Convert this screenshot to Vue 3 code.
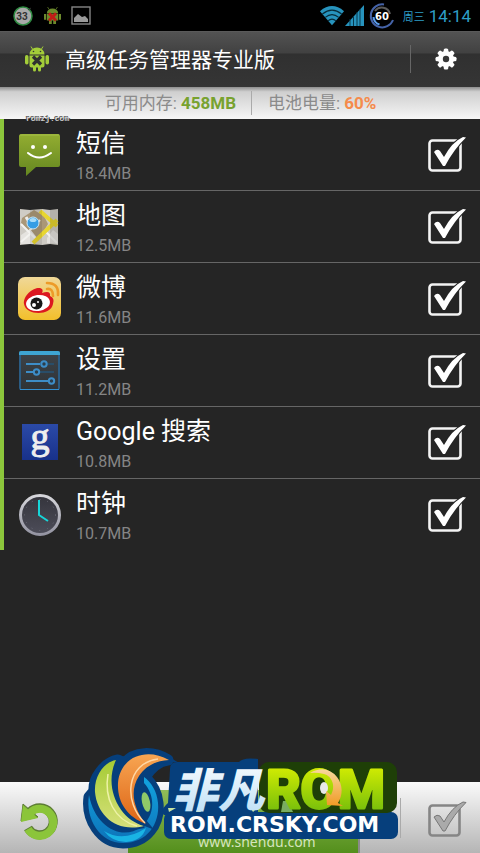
<!-- src/App.vue -->
<template>
  <div class="screen">
    <div class="status-bar">
      <div class="status-left">
        <svg width="22" height="22" viewBox="0 0 22 22">
          <circle cx="11" cy="11" r="9" fill="#a9a9a9" stroke="#2f8b42" stroke-width="1.5" />
          <text x="10" y="15" text-anchor="middle" class="badge-text">33</text>
          <path d="M16 5l3-2" stroke="#333" />
        </svg>
        <svg class="status-droid" width="17" height="17" viewBox="0 0 24 24">
          <path d="M4 9a8 7 0 0 1 16 0zM4 10h16v9H4zM0 10h3v8H0zM21 10h3v8h-3zM7 19h4v5H7zM13 19h4v5h-4z" fill="#6c8a2c" />
          <path d="M7 3L5 0M17 3l2-3" stroke="#6c8a2c" />
          <path d="M7 9l10 10M17 9L7 19" stroke="#c11b17" stroke-width="4" />
        </svg>
        <svg width="20" height="20" viewBox="0 0 20 20">
          <rect x="1" y="1" width="18" height="17" fill="none" stroke="#858585" stroke-width="1.4" />
          <path d="M3 16v-4l4-4 4 3 3-1 3 3v3z" fill="#9a9a9a" />
        </svg>
      </div>
      <div class="status-right">
        <svg width="26" height="21" viewBox="0 0 27 21">
          <path d="M1 6Q13.500-4.500 26 6L13.500 20.500z" fill="#2793bd" />
          <path d="M3.500 9Q13.500 1 23.500 9M6.500 12.500q7-6 14 0M9.500 16q4-3.500 8 0" fill="none" stroke="#062a38" stroke-width="1.2" />
        </svg>
        <svg width="19" height="21" viewBox="0 0 19 21">
          <path d="M0 21L19 0v21z" fill="#2793bd" />
          <path d="M5 14v7M8.500 11v10M12 7v14M15 4v17" stroke="#06384c" />
        </svg>
        <svg class="battery" width="26" height="26" viewBox="0 0 26 26">
          <path d="M15 1.500A11.500 11.500 0 1 0 24 17" fill="none" stroke="#4563a8" stroke-width="2" />
          <path d="M6 8a8.500 8.500 0 0 1 15 3" fill="none" stroke="#5b5b5b" stroke-width="2" />
          <path d="M4.500 14a8.500 8.500 0 0 0 6 7.500" fill="none" stroke="#5b9dea" stroke-width="2" />
          <text x="13" y="17" text-anchor="middle" class="battery-text">60</text>
        </svg>
        <span class="day">周三</span>
        <span class="clock">14:14</span>
      </div>
    </div>

    <header class="header">
      <svg class="app-icon" width="24" height="25" viewBox="0 0 24 25">
        <path d="M4.500 8.500a7.500 7 0 0 1 15 0zM4.500 9.500h15v10a2 2 0 0 1-2 2H16V24a1.300 1.300 0 0 1-3 0v-2.500h-2V24a1.300 1.300 0 0 1-3 0v-2.500H6.500a2 2 0 0 1-2-2z" fill="#a3cd39" />
        <rect x="0" y="9" width="3.500" height="9.500" rx="1.700" fill="#a3cd39" />
        <rect x="20.500" y="9" width="3.500" height="9.500" rx="1.700" fill="#a3cd39" />
        <path d="M7.500 3L6 .5M16.500 3L18 .5" stroke="#a3cd39" />
        <circle cx="8.500" cy="5.500" r=".8" fill="#333" />
        <circle cx="15.500" cy="5.500" r=".8" fill="#333" />
        <path d="M8 10.500l8 8M16 10.500l-8 8" stroke="#303030" stroke-width="3.200" />
      </svg>
      <h1>高级任务管理器专业版</h1>
      <button class="settings" aria-label="设置">
        <svg width="22" height="22" viewBox="-11 -11 22 22">
          <rect v-for="n in 4" :key="n" x="-2.300" y="-10.500" width="4.600" height="21" rx="1.500" fill="#fff" :transform="`rotate(${n * 45})`" />
          <circle r="5.500" fill="none" stroke="#fff" stroke-width="5" />
          <circle r="3.200" fill="#383838" />
        </svg>
      </button>
    </header>

    <div class="info">
      <div class="info-item memory">可用内存: <b class="green">458MB</b></div>
      <div class="info-item power">电池电量: <b class="orange">60%</b></div>
      <span class="watermark">romzj.com</span>
    </div>

    <ul class="tasks">
      <li v-for="task in tasks" :key="task.icon" class="task">
        <svg class="task-icon" width="44" height="44" viewBox="0 0 44 44">
          <g v-if="task.icon === 'sms'">
            <path d="M4 1h36q2 0 2 2v29q0 2-2 2H18L8 43V34H3q-2 0-2-2V3q0-2 3-2z" fill="url(#smsFill)" />
            <path d="M2 2h39" stroke="#a6bf48" />
            <circle cx="15" cy="14" r="2" fill="#fff" />
            <circle cx="27" cy="14" r="2" fill="#fff" />
            <path d="M10 20q11 9 23 0" fill="none" stroke="#fff" stroke-width="2" stroke-linecap="round" />
          </g>
          <g v-else-if="task.icon === 'map'">
            <path d="M2 4l10 1 12-1 8 1 8-1v36l-8-1-8 1-12-1-10 1z" fill="#cfccc5" />
            <path d="M4 13l12-8 10 6 4 8-10 17-9-10-8-8z" fill="#aa9777" />
            <path d="M3 30l9-6 8 10-4 5H3zM29 33l6-8 5 4v10l-11-1z" fill="#e5e3df" />
            <path d="M3 19l14 14M12 25l10-10M28 27l11 11M3 37l9-8" stroke="#f3f2ef" stroke-width="2" />
            <path d="M22 6l17 15M39 15L15 38" fill="none" stroke="#e8d630" stroke-width="4" />
            <path d="M12 5l12-1v36l-12-1z" fill="#000" opacity=".09" />
            <path d="M32 5l8-1v36l-8-1z" fill="#000" opacity=".13" />
            <path d="M13 20L8 12" stroke="#eee" stroke-width="3" />
            <circle cx="15" cy="18" r="6" fill="#359de5" stroke="#c6e5f6" />
            <ellipse cx="15" cy="15" rx="3.500" ry="2" fill="#a6dcfa" />
          </g>
          <g v-else-if="task.icon === 'weibo'">
            <rect width="43" height="43" rx="7" fill="url(#weiboFill)" />
            <path d="M6 27C5 18 16 10 22 11q4 1 2 5 9-3 8 3 5 2 3 8c-2 12-27 12-29 0z" fill="#dc1720" />
            <ellipse cx="20" cy="26" rx="12" ry="8" fill="#fff" transform="rotate(-7 20 26)" />
            <circle cx="18.500" cy="26.500" r="6" fill="#171717" />
            <circle cx="16" cy="28" r="2" fill="#fff" />
            <circle cx="20" cy="25" r="1" fill="#fff" />
            <path d="M29 12q6-1 6 7M29 6q12 0 11 12" fill="none" stroke="#ed9b28" stroke-width="2.600" stroke-linecap="round" />
          </g>
          <g v-else-if="task.icon === 'prefs'">
            <rect x="1" y="2" width="41" height="39" rx="2" fill="#2b5c83" />
            <rect x="3" y="6" width="37" height="34" fill="url(#prefsFill)" />
            <path d="M1 6V4q0-2 2-2h37q2 0 2 2v2z" fill="#3ea5d3" />
            <path d="M2 40.500h39" stroke="#338fd0" />
            <path d="M8 15h28M8 23h28M8 32h28" stroke="#294d68" stroke-width="2" />
            <path d="M8 15h14M8 23h7M8 32h22" stroke="#3d8dc7" stroke-width="2" />
            <g fill="#2a3d4b" stroke="#3d8dc7" stroke-width="2">
              <circle cx="26" cy="15" r="2.700" />
              <circle cx="18.500" cy="23" r="2.700" />
              <circle cx="33.500" cy="32" r="2.700" />
            </g>
          </g>
          <g v-else-if="task.icon === 'google'">
            <rect x="4" y="3" width="36" height="36" fill="url(#googleFill)" />
            <text x="22" y="28" text-anchor="middle" class="google-g">g</text>
          </g>
          <g v-else>
            <circle cx="22" cy="22" r="19.500" fill="url(#clockFill)" stroke="url(#rimFill)" stroke-width="3" />
            <circle cx="22" cy="22" r="15.500" fill="none" stroke="#6b6b78" stroke-dasharray="1 7" />
            <path d="M21 7v15l9 6" fill="none" stroke="#16d5d9" stroke-width="2" />
          </g>
        </svg>
        <div class="task-text">
          <div class="task-name">{{ task.name }}</div>
          <div class="task-size">{{ task.size }}</div>
        </div>
        <label class="check">
          <input v-model="task.checked" type="checkbox" :aria-label="task.name" />
          <svg width="40" height="38" viewBox="0 0 40 38">
            <rect x="2.500" y="4.500" width="31" height="30" rx="3" fill="none" stroke="#f4f4f4" stroke-width="2.600" />
            <path v-if="task.checked" d="M7 16q3-4 6-1l4 6Q25 6 36 1l3 .5Q27 13 18 30h-2z" fill="#fff" stroke="#252525" stroke-width="2" paint-order="stroke" />
          </svg>
        </label>
      </li>
    </ul>

    <footer class="footer">
      <button class="refresh" aria-label="刷新">
        <svg width="40" height="38" viewBox="0 0 40 38">
          <g id="arrow" fill="none" stroke="#5c7c34">
            <path d="M8 27A13.500 13.500 0 1 0 10 11" stroke-width="9" />
            <path d="M3 3L1 20l17-4z" fill="#5c7c34" />
          </g>
          <path d="M8 28A13.500 13.500 0 1 0 10 12" fill="none" stroke="#8bc53a" stroke-width="8" />
          <path d="M3 4L1 21l17-4z" fill="#8bc53a" />
        </svg>
      </button>
      <button class="clean">www.shendu.com</button>
      <label class="check select-all">
        <input v-model="allChecked" type="checkbox" aria-label="全选" />
        <svg width="40" height="38" viewBox="0 0 40 38">
          <rect x="2.500" y="5.500" width="30" height="30" rx="3" fill="none" stroke="#858585" stroke-width="2.600" />
          <path v-if="allChecked" d="M7 17q3-3 6-1l4 6Q25 7 36 2l3 .5Q27 14 18 31h-2z" fill="#aaa" stroke="#777" />
        </svg>
      </label>

      <svg class="logo" width="320" height="104" viewBox="0 0 320 104">
        <!-- swirl -->
        <g fill="#063f7c" stroke="#063f7c" stroke-width="11" stroke-linejoin="round">
          <path d="M7 48C4 70 18 94 41 94c24 0 37-19 35-40-1-12-7-20-13-26 6-9 14-16 23-17C72 2 52 2 43 14L36 11C22 14 11 29 12 42z" />
        </g>
        <path d="M7 46C3 70 18 94 41 94c24 0 37-19 35-40-1-12-7-21-14-26v6c11 12 12 32-3 44-18 14-46 1-52-32z" fill="url(#blueSwirl)" />
        <path d="M22 82q19 12 42-3-4 13-20 14-14 0-22-11z" fill="#19b4e4" />
        <path d="M34 11C22 13 12 27 13 43c2 23 21 41 49 34C38 71 21 39 34 11z" fill="url(#greenSwirl)" stroke="#063f7c" stroke-width="4" paint-order="stroke" />
        <path d="M26 25c-4 24 6 46 29 52" fill="none" stroke="#edf2a6" stroke-width="1.500" />
        <path d="M87 11C64-2 38 8 36 34c-1 19 9 34 28 41-12-14-17-33-7-48 6-9 15-15 30-16z" fill="url(#orangeSwirl)" stroke="#063f7c" stroke-width="5" paint-order="stroke" />
        <path d="M76 10C44 14 41 53 63 74" fill="none" stroke="#ffd7a4" stroke-width="1.500" />
        <ellipse cx="64" cy="53" rx="4" ry="10" fill="#8fca68" transform="rotate(-12 64 53)" />
        <!-- backing plates -->
        <path d="M88 20q0-7 7-7h62q4-5 19-3v56H82q-5-4 4-12z" fill="#063f7c" />
        <rect x="82" y="63" width="234" height="27" rx="7" fill="#063f7c" />
        <rect x="177" y="13" width="138" height="51" rx="10" fill="#1e3f07" />
        <path d="M86 59h8l-7 4zM114 63l2-5 3 5zM168 58l6 2-3 3z" fill="#c9e4a0" />
        <path d="M201 52h5l5 11h-12z" fill="#79ad60" />
        <text x="90" y="58" class="logo-cn">非凡</text>
        <text x="184" y="59" class="logo-rom">ROM</text>
        <ellipse cx="242" cy="39" rx="4" ry="6" fill="#e8e8e8" />
        <path d="M228 24q16-9 27 4c6 8 6 18 1 26l5 3-16-1-1-14 5 4c5-9 1-19-7-21q-8-2-14-1z" fill="url(#arrowFill)" />
        <text x="88" y="83" class="logo-url">ROM.CRSKY.COM</text>
      </svg>
    </footer>

    <svg class="defs" width="0" height="0" aria-hidden="true">
      <defs>
        <linearGradient v-for="g in gradients" :id="g.id" :key="g.id" x1="0" y1="0" x2="0" y2="1">
          <stop offset="0" :stop-color="g.from" />
          <stop offset="1" :stop-color="g.to" />
        </linearGradient>
      </defs>
    </svg>
  </div>
</template>

<script setup>
import { ref } from 'vue';

const tasks = ref([
  { icon: 'sms', name: '短信', size: '18.4MB', checked: true },
  { icon: 'map', name: '地图', size: '12.5MB', checked: true },
  { icon: 'weibo', name: '微博', size: '11.6MB', checked: true },
  { icon: 'prefs', name: '设置', size: '11.2MB', checked: true },
  { icon: 'google', name: 'Google 搜索', size: '10.8MB', checked: true },
  { icon: 'clock', name: '时钟', size: '10.7MB', checked: true }
]);

const allChecked = ref(true);

const gradients = [
  { id: 'smsFill', from: '#93ad31', to: '#648720' },
  { id: 'weiboFill', from: '#f0d898', to: '#f2bf2b' },
  { id: 'prefsFill', from: '#3c4247', to: '#2f3336' },
  { id: 'googleFill', from: '#2b4aa8', to: '#18318a' },
  { id: 'clockFill', from: '#34343c', to: '#4d4d59' },
  { id: 'rimFill', from: '#d5d5da', to: '#9494a2' },
  { id: 'blueSwirl', from: '#12a4e0', to: '#0d72b8' },
  { id: 'greenSwirl', from: '#a5cb34', to: '#d5e07a' },
  { id: 'orangeSwirl', from: '#f7a552', to: '#dd6415' },
  { id: 'romFill', from: '#e4f500', to: '#63b50d' },
  { id: 'cnFill', from: '#ffffff', to: '#b9ddf5' },
  { id: 'arrowFill', from: '#f8d79c', to: '#f09a24' }
];
</script>

<style>
body {
  margin: 0;
  background: #252525;
}
</style>

<style scoped>
.screen {
  display: flex;
  flex-direction: column;
  min-height: 100vh;
  overflow: hidden;
  background: #252525;
  font-family: Roboto, "Noto Sans CJK SC", sans-serif;
}

svg {
  display: block;
  flex: none;
  overflow: visible;
}

button {
  padding: 0;
  border: 0;
  background: none;
  font-family: inherit;
  cursor: pointer;
}

.status-bar {
  display: flex;
  justify-content: space-between;
  align-items: center;
  height: 31px;
  padding: 0 9px 0 12px;
  background: #000;
}

.status-left,
.status-right {
  display: flex;
  align-items: center;
}

.status-left {
  gap: 10px;
}

.status-right {
  color: #2e9ec8;
}

.badge-text {
  font: bold 10px Roboto, sans-serif;
  fill: #333;
}

.battery {
  margin: 0 8px 0 5px;
}

.battery-text {
  font: bold 10px "DejaVu Sans", sans-serif;
  fill: #fff;
}

.day {
  margin-right: 4px;
  font-size: 11px;
}

.clock {
  font-size: 17px;
}

.header {
  display: flex;
  align-items: center;
  height: 56px;
  padding: 0 0 2px 25px;
  box-sizing: border-box;
  border-top: 1px solid #5a5a5a;
  background: linear-gradient(#535353, #414141 38%, #303030 40%, #353535);
}

.header h1 {
  flex: 1;
  margin: 0 0 2px 16px;
  color: #fff;
  font-size: 21px;
  font-weight: 400;
}

.settings {
  display: flex;
  align-items: center;
  justify-content: center;
  width: 70px;
  height: 28px;
  border-left: 1px solid #666;
}

.info {
  position: relative;
  display: flex;
  align-items: center;
  height: 32px;
  background: linear-gradient(#8e8e8e, #cfcfcf 15%, #f6f6f6);
  color: #8b8b8b;
  font-size: 17px;
}

.info-item {
  flex: 1;
  line-height: 24px;
}

.memory {
  flex: 0 0 calc(50% + 12px);
  padding-right: 15px;
  box-sizing: border-box;
  border-right: 1px solid #aaa;
  text-align: right;
}

.power {
  padding-left: 16px;
}

.info b {
  font-weight: 700;
}

.green {
  color: #78a22f;
}

.orange {
  color: #f58b4b;
}

.watermark {
  position: absolute;
  left: 26px;
  bottom: -5px;
  color: #ccc;
  font: bold 8px/10px "Liberation Mono", monospace;
  text-shadow: 1px 1px 0 #222, -1px -1px 0 #555;
}

.tasks {
  margin: 0 0 auto;
  padding: 0;
  border-left: 4px solid #8cc63c;
  list-style: none;
}

.task {
  display: flex;
  align-items: center;
  height: 72px;
  padding: 0 13px 0 14px;
  box-sizing: border-box;
  border-bottom: 1px solid #666;
}

.task:last-child {
  height: 71px;
  border-bottom: 0;
}

.task-text {
  flex: 1;
  margin-left: 14px;
  padding-top: 4px;
}

.task-name {
  color: #fff;
  font-size: 25px;
  line-height: 34px;
}

.task-size {
  color: #858585;
  font-size: 16px;
  line-height: 26px;
}

.google-g {
  font: 38px "Liberation Serif", serif;
  fill: #eee;
  stroke: #eee;
}

.check {
  position: relative;
  cursor: pointer;
}

.check input {
  position: absolute;
  inset: 0;
  width: 100%;
  height: 100%;
  margin: 0;
  opacity: 0;
  cursor: pointer;
}

.footer {
  position: relative;
  display: flex;
  align-items: center;
  height: 71px;
  padding: 0 13px 0 20px;
  background: linear-gradient(#fafafa, #b5b5b5);
}

.refresh {
  padding-top: 4px;
}

.clean {
  display: flex;
  flex: 1;
  align-items: flex-end;
  align-self: stretch;
  justify-content: center;
  margin: 8px 40px 0 68px;
  padding: 0 0 1px 28px;
  border-right: 2px solid #8a8a8a;
  background: linear-gradient(#90bd59, #548f1c);
  color: #d5e5bd;
  font: 14px/20px "Noto Sans", sans-serif;
}

.select-all {
  padding: 2px 0 0 26px;
  border-left: 1px solid #aaa;
}

.logo {
  position: absolute;
  left: 82px;
  bottom: 0;
  pointer-events: none;
}

.logo-cn {
  font: italic 900 46px "Noto Sans CJK SC", sans-serif;
  fill: url(#cnFill);
}

.logo-rom {
  font: bold 54px Roboto, sans-serif;
  fill: url(#romFill);
  stroke: url(#romFill);
  stroke-width: 3px;
  stroke-linejoin: round;
}

.logo-url {
  font: bold 22px "DejaVu Sans", sans-serif;
  fill: #fff;
}

.defs {
  position: absolute;
}
</style>
